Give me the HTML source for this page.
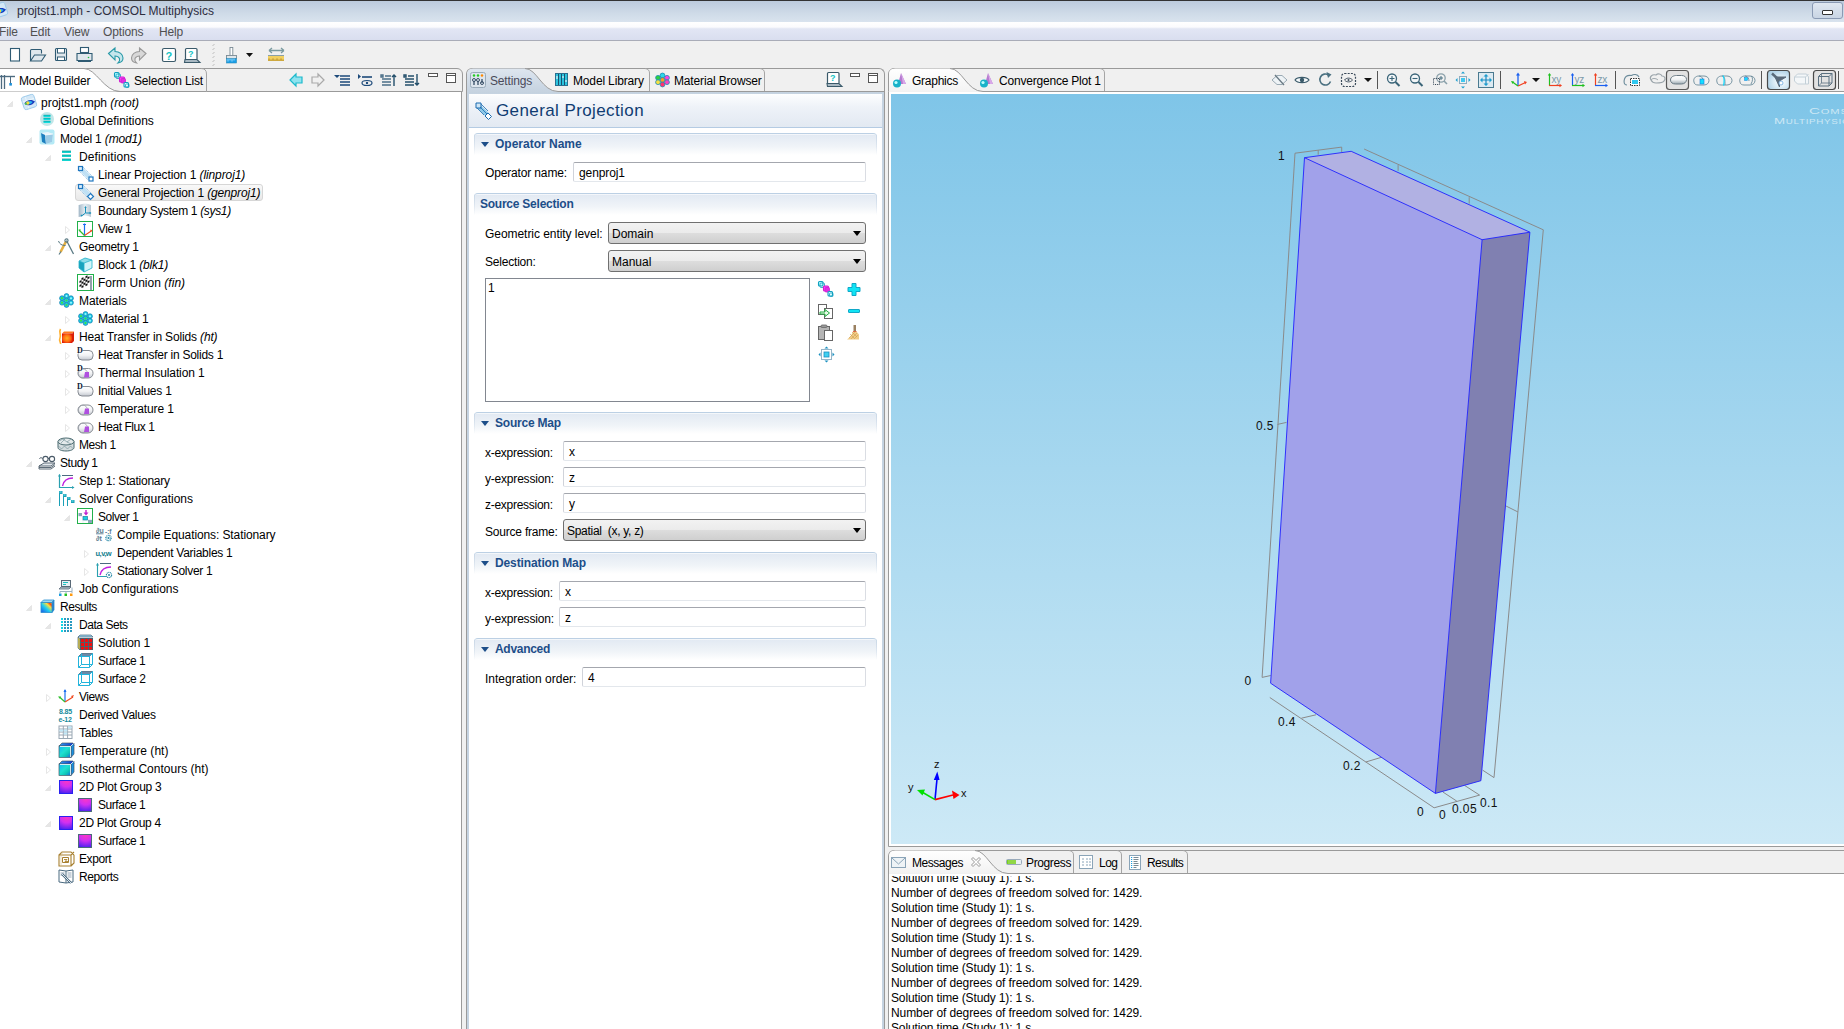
<!DOCTYPE html>
<html><head><meta charset="utf-8">
<style>
*{margin:0;padding:0;box-sizing:border-box}
html,body{width:1844px;height:1029px;overflow:hidden;background:#f0f0f0;font-family:"Liberation Sans",sans-serif;font-size:12px;color:#000}
.a{position:absolute}
.t{position:absolute;white-space:nowrap;line-height:14px;font-size:12px;letter-spacing:-0.15px}
svg{position:absolute;overflow:visible}
#title{left:0;top:0;width:1844px;height:22px;background:linear-gradient(#bccbdd,#cfdbe8 60%,#d9e3ee);border-top:1px solid #333}
#menu{left:0;top:22px;width:1844px;height:19px;background:linear-gradient(#ffffff 0,#fbfbfd 28%,#e2e6f4 38%,#d9deef 100%);border-bottom:1px solid #a9acb8}
#tb{left:0;top:41px;width:1844px;height:27px;background:#f0f0f0}
.pb{position:absolute;border:1px solid #9a9a9a;border-bottom:none}
.i{font-style:italic}
.sec{position:absolute;height:22px;border-top:1px solid #bcd0e4;border-radius:4px 4px 0 0;background:linear-gradient(#c9d7e6,rgba(201,215,230,0)) left top/1px 100% no-repeat,linear-gradient(#c9d7e6,rgba(201,215,230,0)) right top/1px 100% no-repeat,linear-gradient(#fff 0,#e3eaf3 6%,#f0f4f8 60%,#fff 100%)}
.sec .tx{position:absolute;left:21px;top:3px;font-weight:bold;color:#1d4e89;font-size:12px;line-height:14px;white-space:nowrap}
.tri{position:absolute;left:6.5px;top:8px;width:0;height:0;border-left:4px solid transparent;border-right:4px solid transparent;border-top:5px solid #1d4e89}
.inp{position:absolute;height:20px;border:1px solid;border-color:#a4a7ae #dadde3 #e3e7ec #d0d3da;background:#fff;border-radius:2px}
.inp span{position:absolute;left:5px;top:3px;line-height:14px;white-space:nowrap}
.dd{position:absolute;height:22px;border:1px solid #707070;border-radius:3px;background:linear-gradient(#f2f2f2 0,#ebebeb 50%,#dddddd 51%,#cfcfcf 100%)}
.dd span{position:absolute;left:3px;top:4px;line-height:14px;white-space:nowrap}
.dd i{position:absolute;right:4px;top:8px;width:0;height:0;border-left:4px solid transparent;border-right:4px solid transparent;border-top:5px solid #000}
.msg{position:absolute;left:891px;white-space:nowrap;line-height:15px;font-size:12px;letter-spacing:-0.09px}
</style></head><body>

<!-- TITLE BAR -->
<div id="title" class="a"></div>
<svg style="left:-8px;top:2px" width="16" height="16" viewBox="0 0 16 16"><g transform="rotate(-18 8 8)"><rect x="1.5" y="1.5" width="13" height="13" rx="2" fill="#d4e8f7" stroke="#9ccaea" stroke-width=".9"/></g><path d="M3.5 9.5c1.5-3.5 7-5 10.5-2-2 4-7.5 5-10.5 2z" fill="#1a3cc0"/><path d="M5 9.3c1.2-2.2 4.5-3 6.5-1.3-1.5 2.3-4.7 3-6.5 1.3z" fill="#28b8f0"/><circle cx="7.5" cy="9" r="1.7" fill="#f4dc3a"/><circle cx="6" cy="10" r="1.1" fill="#4cc44c"/></svg>
<div class="t" style="left:17px;top:4px;color:#2e2e3e;font-size:12px;letter-spacing:0">projtst1.mph - COMSOL Multiphysics</div>
<div class="a" style="left:1812px;top:2px;width:31px;height:17px;border:1px solid #8a9ab4;border-radius:3px;background:linear-gradient(#dfe7f1,#c9d5e4)"></div>
<div class="a" style="left:1822px;top:10px;width:11px;height:5px;border:1px solid #333;border-radius:1px;background:#fff"></div>
<!-- MENU -->
<div id="menu" class="a"></div>
<div class="t" style="left:-1px;top:25px;color:#505050">File</div>
<div class="t" style="left:30px;top:25px;color:#505050">Edit</div>
<div class="t" style="left:64px;top:25px;color:#505050">View</div>
<div class="t" style="left:103px;top:25px;color:#505050">Options</div>
<div class="t" style="left:159px;top:25px;color:#505050">Help</div>
<!-- TOOLBAR -->
<div id="tb" class="a"></div>
<svg style="left:0;top:41px" width="300" height="27" viewBox="0 0 300 27">
 <rect x="10.5" y="7.5" width="9" height="12.5" fill="#fff" stroke="#2f5b73" stroke-width="1.1"/>
 <path d="M30.5 20V9.5q0-1 1-1h9q1 0 1 1v3M30.5 20l4-6h11l-4 6z" fill="#dfe7ec" stroke="#2f5b73" stroke-width="1.1"/>
 <path d="M55.5 8.5q0-1 1-1h9q1 0 1 1v10q0 1-1 1h-9q-1 0-1-1z" fill="#dfe7ec" stroke="#2f5b73" stroke-width="1.1"/><rect x="57.5" y="7.5" width="7" height="4.5" fill="#fff" stroke="#2f5b73"/><rect x="57.5" y="16" width="7" height="3.5" fill="#fff" stroke="#2f5b73"/>
 <rect x="80.5" y="6.5" width="8" height="5" fill="#fff" stroke="#2f5b73" stroke-width="1.1"/><path d="M77 12.5h15v7H77z" fill="#dfe7ec" stroke="#2f5b73" stroke-width="1.1"/><path d="M78 20.5h13" stroke="#2f5b73"/><circle cx="88.5" cy="16.5" r=".8" fill="#20c040"/>
 <path d="M108.5 12.5L115 7v3.5c4.5 0 8 3 8 6.5 0 2.5-2 4.5-5 5 1.5-1.5 2-3 1.5-4.5-.8-1.5-2.5-2.5-4.5-2.5V19z" fill="#c4e6ec" stroke="#2a9aa8" stroke-width="1.1"/>
 <path d="M146 12.5L139.5 7v3.5c-4.5 0-8 3-8 6.5 0 2.5 2 4.5 5 5-1.5-1.5-2-3-1.5-4.5.8-1.5 2.5-2.5 4.5-2.5V19z" fill="#d8d8d8" stroke="#9a9a9a" stroke-width="1.1"/>
 <rect x="162.5" y="7.5" width="13" height="13" rx="1.5" fill="#fff" stroke="#3a5a6a" stroke-width="1.2"/><text x="165.5" y="18.5" font-size="11" font-weight="bold" fill="#12c4c4" font-family="Liberation Sans">?</text>
 <path d="M185.5 18V8.5q0-1 1-1h9.5q1 0 1 1V18" fill="#fff" stroke="#3a5a6a" stroke-width="1.2"/><path d="M185 18.5h12l3 3h-15.5z" fill="#a8b8c2" stroke="#3a5a6a" stroke-width="1.1"/><text x="188" y="16" font-size="9" font-weight="bold" fill="#12c4c4" font-family="Liberation Sans">?</text>
 <path d="M213 4.5l1-1M213 8.5l1-1M213 12.5l1-1M213 16.5l1-1M213 20.5l1-1M213 24.5l1-1" stroke="#888" stroke-width="1"/>
 <rect x="230" y="6.5" width="2.8" height="8.5" fill="#fff" stroke="#7a8a94" stroke-width=".9"/><rect x="226.5" y="14.5" width="10" height="3" fill="#dfe6ea" stroke="#7a8a94" stroke-width=".9"/><rect x="226.5" y="17.5" width="10" height="4.5" fill="#1a9ee8" stroke="#2a8ab8" stroke-width=".6"/><path d="M228 17.5v3M230 17.5v2M232 17.5v3M234 17.5v2" stroke="#c8ecff" stroke-width=".8"/>
 <path d="M246 12h7l-3.5 4z" fill="#111"/>
 <path d="M269 9.5h15M269 9.5l3-2.5M269 9.5l3 2.5M284 9.5l-3-2.5M284 9.5l-3 2.5" stroke="#7a9aa0" stroke-width="1.3" fill="none"/><path d="M268 14.5h16" stroke="#8aa0a8"/><rect x="268" y="15" width="16" height="5" fill="#f2d060"/><path d="M269 20v-2.5M271 20v-1.5M273 20v-2.5M275 20v-1.5M277 20v-2.5M279 20v-1.5M281 20v-2.5M283 20v-1.5" stroke="#a07818" stroke-width=".9"/>
</svg>

<!-- MODEL BUILDER -->
<div class="a" style="left:-6px;top:68px;width:469px;height:24px;border:1px solid #9a9a9a;border-bottom:1px solid #9a9a9a;border-radius:6px 6px 0 0;background:#f0f0f0"></div>
<svg style="left:0;top:68px" width="130" height="24" viewBox="0 0 130 24"><path d="M0 0.5H84C96 0.5 104 23.5 120 23.5H0z" fill="#fff"/><path d="M0 0.5H84C96 0.5 104 23.5 120 23.5" fill="none" stroke="#9a9a9a"/></svg>
<svg style="left:190px;top:68px" width="20" height="24" viewBox="0 0 20 24"><path d="M16.5 24V6Q16.5 0.5 11 0.5" fill="none" stroke="#a5a5a5"/></svg>
<div class="a" style="left:0;top:92px;width:462px;height:937px;background:#fff;border-right:1px solid #9a9a9a"></div>
<svg style="left:0;top:68px" width="20" height="24" viewBox="0 0 20 24"><path d="M0 8.5h15" stroke="#4d6b80" stroke-width="1.4"/><path d="M1.5 7v14M4.5 7v14" stroke="#4d6b80" stroke-width="1.3"/><path d="M10.5 9v6" stroke="#4d6b80" stroke-width="1"/><rect x="9.3" y="15" width="2.6" height="2.6" fill="#1c8fd8"/></svg>
<div class="t" style="left:19px;top:74px">Model Builder</div>
<svg style="left:113px;top:68px" width="20" height="24" viewBox="0 0 20 24"><rect x="1.5" y="4.5" width="4.5" height="4.5" rx="1" fill="#bff" stroke="#10a0c0" stroke-width="1.1"/><rect x="3" y="6" width="4.5" height="4.5" rx="1" fill="none" stroke="#10a0c0" stroke-width=".8"/><rect x="6.5" y="9" width="5" height="5" rx="1" fill="#f4f" stroke="#d020d0" stroke-width="1.1"/><rect x="8" y="10.5" width="4.5" height="4.5" rx="1" fill="#e030e0" stroke="#d020d0" stroke-width=".8"/><rect x="11" y="14.5" width="4.5" height="4.5" rx="1" fill="#dff" stroke="#10a0c0" stroke-width="1.1"/><rect x="12.5" y="16" width="3.5" height="3.5" rx=".8" fill="none" stroke="#10a0c0" stroke-width=".8"/></svg>
<div class="t" style="left:134px;top:74px;letter-spacing:-0.17px">Selection List</div>
<svg style="left:280px;top:66px" width="182" height="28" viewBox="0 0 182 28">
 <path d="M10 14l6-6v3h6v6h-6v3z" fill="#8fe3ef" stroke="#1cb9cc" stroke-width="1.2"/>
 <path d="M44 14l-6-6v3h-6v6h6v3z" fill="none" stroke="#a9a9a9" stroke-width="1.2"/>
 <path d="M54 9h6l-3 3z" fill="#1d4a7a"/><path d="M60 10h10M60 13h10M60 16h10M60 19h10" stroke="#1d4a7a" stroke-width="1.6"/>
 <path d="M78 8v5l3-2.5z" fill="#1d4a7a"/><path d="M82 11h10" stroke="#1d4a7a" stroke-width="1.6"/><ellipse cx="87" cy="17" rx="5" ry="2.5" fill="none" stroke="#1d4a7a" stroke-width="1.2"/><circle cx="87" cy="17" r="1.2" fill="#1d4a7a"/>
 <path d="M101 9h2v2h-2zM105 10h6M102 13h9M102 16h9M102 19h9" stroke="#4b6f88" stroke-width="1.4" fill="none"/><path d="M114 9v11M112 11l2-2 2 2" stroke="#234f6b" stroke-width="1.4" fill="none"/>
 <path d="M124 9h2v2h-2zM128 10h6M125 13h9M125 16h9M125 19h9" stroke="#234f6b" stroke-width="1.4" fill="none"/><path d="M137 8v11M135 17l2 2 2-2" stroke="#234f6b" stroke-width="1.4" fill="none"/>
 <rect x="148.5" y="7.5" width="9" height="3" fill="#fff" stroke="#555"/>
 <rect x="166.5" y="7.5" width="9" height="9" fill="#fff" stroke="#555"/><path d="M166.5 9.5h9" stroke="#555"/>
</svg>

<svg width="0" height="0" style="position:absolute"><defs>
<linearGradient id="sysg" x1="0" y1="0" x2="1" y2="0"><stop offset="0" stop-color="#a9bccb"/><stop offset=".5" stop-color="#e4edf3"/><stop offset="1" stop-color="#b8c8d4"/></linearGradient>
<linearGradient id="pillg" x1="0" y1="0" x2="0" y2="1"><stop offset="0" stop-color="#ffffff"/><stop offset=".5" stop-color="#f2f3f5"/><stop offset="1" stop-color="#c4c8d0"/></linearGradient>
<radialGradient id="htg" cx=".5" cy=".5" r=".6"><stop offset="0" stop-color="#ffb020"/><stop offset=".6" stop-color="#ff6a10"/><stop offset="1" stop-color="#e01a08"/></radialGradient>
<linearGradient id="resg" x1="1" y1="0" x2="0" y2="1"><stop offset="0" stop-color="#ffd020"/><stop offset=".15" stop-color="#ff4010"/><stop offset=".3" stop-color="#f8e040"/><stop offset=".55" stop-color="#20d0f0"/><stop offset="1" stop-color="#1a50e8"/></linearGradient>
<linearGradient id="pgfront" x1="0" y1="0" x2="1" y2="1"><stop offset="0" stop-color="#10b8f8"/><stop offset=".45" stop-color="#20e0d0"/><stop offset=".7" stop-color="#10c8b8"/><stop offset="1" stop-color="#1a60f0"/></linearGradient>
<linearGradient id="pgtop" x1="0" y1="0" x2="1" y2="0"><stop offset="0" stop-color="#30a0f0"/><stop offset="1" stop-color="#0a30d0"/></linearGradient>
<radialGradient id="pg2" cx=".55" cy="0" r="1.1"><stop offset="0" stop-color="#ff38c0"/><stop offset=".45" stop-color="#d030f0"/><stop offset="1" stop-color="#3a20f0"/></radialGradient>
</defs></svg>
<!-- TREE -->
<svg style="left:21px;top:94px" width="16" height="16" viewBox="0 0 16 16"><g transform="rotate(-18 8 8)"><rect x="1.5" y="1.5" width="13" height="13" rx="2" fill="#d4e8f7" stroke="#9ccaea" stroke-width=".9"/><path d="M2 6h12M6 2v12" stroke="#eef7fd" stroke-width=".8"/></g><path d="M3.5 9.5c1.5-3.5 7-5 10.5-2-2 4-7.5 5-10.5 2z" fill="#1a3cc0"/><path d="M5 9.3c1.2-2.2 4.5-3 6.5-1.3-1.5 2.3-4.7 3-6.5 1.3z" fill="#28b8f0"/><circle cx="6.8" cy="9" r="1.7" fill="#f4dc3a"/><circle cx="4.8" cy="9.8" r="1.1" fill="#4cc44c"/></svg>
<svg style="left:6px;top:93px" width="8" height="18" viewBox="0 0 8 18"><path d="M6.5 8.5v5h-5z" fill="#e6e6e6" stroke="#dcdcdc" stroke-width=".6"/></svg>
<div class="t" style="left:41px;top:96px;letter-spacing:-0.002px">projtst1.mph<span class="i"> (root)</span></div>
<svg style="left:40px;top:112px" width="16" height="16" viewBox="0 0 16 16"><circle cx="7" cy="7" r="7" fill="#c2e6e8"/><path d="M3.5 4h7M3.5 7h7M3.5 10h7" stroke="#12dede" stroke-width="1.8"/><path d="M3.5 3.2h7M3.5 6.2h7M3.5 9.2h7" stroke="#0a8c96" stroke-width=".6"/></svg>
<div class="t" style="left:60px;top:114px;letter-spacing:-0.015px">Global Definitions</div>
<svg style="left:40px;top:130px" width="16" height="16" viewBox="0 0 16 16"><rect x="-0.5" y="-0.5" width="15" height="15" rx="2" fill="#b4eaf6"/><path d="M1 3l7-1 5 2-1 8-6 2-4-2z" fill="#eaf4fb"/><path d="M1 3l4 2 1 9-4-2z" fill="#1c7fbf"/><path d="M5 5l8-1-1 8-6 2z" fill="#9ccbe6"/><path d="M5 5l8-1" stroke="#fff" stroke-width=".8"/></svg>
<svg style="left:25px;top:129px" width="8" height="18" viewBox="0 0 8 18"><path d="M6.5 8.5v5h-5z" fill="#e6e6e6" stroke="#dcdcdc" stroke-width=".6"/></svg>
<div class="t" style="left:60px;top:132px;letter-spacing:-0.149px">Model 1<span class="i"> (mod1)</span></div>
<svg style="left:59px;top:148px" width="16" height="16" viewBox="0 0 16 16"><path d="M3 4h9M3 8h9M3 12h9" stroke="#14d4d0" stroke-width="2.2"/><path d="M3 3h9M3 7h9M3 11h9" stroke="#0a8a8a" stroke-width=".7"/></svg>
<svg style="left:44px;top:147px" width="8" height="18" viewBox="0 0 8 18"><path d="M6.5 8.5v5h-5z" fill="#e6e6e6" stroke="#dcdcdc" stroke-width=".6"/></svg>
<div class="t" style="left:79px;top:150px;letter-spacing:0.097px">Definitions</div>
<svg style="left:78px;top:166px" width="16" height="16" viewBox="0 0 16 16"><path d="M2.5 2.5l10.5 10.5" stroke="#bfe0f4" stroke-width="4.5"/><path d="M1 5l9 9M5 1l9 9" stroke="#6aa8d8" stroke-width=".8" stroke-dasharray="1 1"/><rect x="0.5" y="0.5" width="4" height="4" fill="#dbeefb" stroke="#1f77c0" stroke-width="1.2"/><rect x="11" y="11" width="4" height="4" fill="#fff" stroke="#1f77c0" stroke-width="1.2"/></svg>
<div class="t" style="left:98px;top:168px;letter-spacing:-0.096px">Linear Projection 1<span class="i"> (linproj1)</span></div>
<div class="a" style="left:75px;top:184px;width:188px;height:17px;border:1px solid #d6d6d6;border-radius:3px;background:linear-gradient(#f9f9f9,#e8e8e8)"></div>
<svg style="left:78px;top:184px" width="16" height="16" viewBox="0 0 16 16"><path d="M2.5 2.5l9.5 9.5" stroke="#bfe0f4" stroke-width="4.5"/><path d="M1 5l8.5 8.5M5 1l8.5 8.5" stroke="#6aa8d8" stroke-width=".8" stroke-dasharray="1 1"/><rect x="0.5" y="0.5" width="4" height="4" fill="#dbeefb" stroke="#1f77c0" stroke-width="1.2"/><path d="M12.5 9.5l3 3-3 3-3-3z" fill="#fff" stroke="#1f77c0" stroke-width="1.2"/></svg>
<div class="t" style="left:98px;top:186px;letter-spacing:-0.168px">General Projection 1<span class="i"> (genproj1)</span></div>
<svg style="left:78px;top:202px" width="16" height="16" viewBox="0 0 16 16"><path d="M1 3c2-1 4-1.5 6-1.5s4 .5 6 1.5v12c-2-1-4-1.5-6-1.5s-4 .5-6 1.5z" fill="url(#sysg)"/><path d="M1 3v12" stroke="#a8bccb" stroke-width=".8"/><path d="M7.5 11V5M7.5 11h5M7.5 11l-4 3" stroke="#1a90b8" stroke-width="1"/><path d="M6.3 6l1.2-2 1.2 2zM11.5 9.8l2 1.2-2 1.2zM3 12.3l-0.5 2.2 2.2-.5z" fill="#1a90b8"/></svg>
<div class="t" style="left:98px;top:204px;letter-spacing:-0.327px">Boundary System 1<span class="i"> (sys1)</span></div>
<svg style="left:78px;top:220px" width="16" height="16" viewBox="0 0 16 16"><rect x="-0.5" y="1.5" width="15" height="15" fill="#fff" stroke="#21b04a"/><path d="M6.5 15.5V3.5" stroke="#1a6ef0" stroke-width="1.2"/><path d="M5 4.5h3" stroke="#1a6ef0" stroke-width="1"/><path d="M6.5 15.5L1 10" stroke="#2fc02f" stroke-width="1.2"/><path d="M0.5 9.5l2.5 0-1.5 2z" fill="#2fc02f"/><path d="M6.5 15.5L14 10.5" stroke="#f04a20" stroke-width="1.2"/><path d="M14.5 10l-2.5-.3 1 2z" fill="#f04a20"/></svg>
<svg style="left:63px;top:219px" width="8" height="18" viewBox="0 0 8 18"><path d="M2.5 7.5l4 3.5-4 3.5z" fill="none" stroke="#e6e6e6"/></svg>
<div class="t" style="left:98px;top:222px;letter-spacing:-0.45px">View 1</div>
<svg style="left:59px;top:238px" width="16" height="16" viewBox="0 0 16 16"><path d="M7.5 2.5L14.5 16" stroke="#5a7a84" stroke-width="1.3"/><path d="M7 3.5L1.5 14" stroke="#e6b040" stroke-width="2.6"/><path d="M2 13.5L0 16.5" stroke="#5a7a84" stroke-width="1.2"/><circle cx="7.5" cy="2.5" r="1.6" fill="none" stroke="#5a7a84" stroke-width="1.1"/><path d="M-0.5 3c1 3 3 4.5 7 4.5" stroke="#5a7a84" fill="none" stroke-width="1"/></svg>
<svg style="left:44px;top:237px" width="8" height="18" viewBox="0 0 8 18"><path d="M6.5 8.5v5h-5z" fill="#e6e6e6" stroke="#dcdcdc" stroke-width=".6"/></svg>
<div class="t" style="left:79px;top:240px;letter-spacing:-0.299px">Geometry 1</div>
<svg style="left:78px;top:256px" width="16" height="16" viewBox="0 0 16 16"><path d="M1 5L7 2L14 4L6 7z" fill="#8fdde8"/><path d="M1 5L6 7V16L1 12z" fill="#1aa3bd"/><path d="M6 7L14 4V12L6 16z" fill="#d2f5f9"/><path d="M1 5L7 2L14 4V12L6 16L1 12zM1 5L6 7L14 4M6 7V16" fill="none" stroke="#1fb0c8" stroke-width=".8"/></svg>
<div class="t" style="left:98px;top:258px;letter-spacing:-0.184px">Block 1<span class="i"> (blk1)</span></div>
<svg style="left:78px;top:274px" width="16" height="16" viewBox="0 0 16 16"><rect x="-0.5" y="0.5" width="16" height="16" fill="#fff" stroke="#21b04a"/><g transform="translate(1.5,6) skewY(-25)"><path d="M0 1h2v2H0zM2 3h2v2H2zM4 1h2v2H4zM6 3h2v2H6zM8 1h2v2H8zM0 5h2v2H0zM4 5h2v2H4zM8 5h2v2H8zM2 -1h2v2H2zM6 -1h2v2H6zM2 7h2v2H2zM6 7h2v2H6z" fill="#111"/></g><path d="M13 2v14" stroke="#7a8898" stroke-width="1.6"/></svg>
<div class="t" style="left:98px;top:276px;letter-spacing:0.028px">Form Union<span class="i"> (fin)</span></div>
<svg style="left:59px;top:292px" width="16" height="16" viewBox="0 0 16 16"><g stroke="#1a86b6" stroke-width=".8" fill="#18cbe6"><circle cx="7.5" cy="4" r="2.4"/><circle cx="7.5" cy="8.5" r="2.4"/><circle cx="7.5" cy="13" r="2.4"/><circle cx="3" cy="6.2" r="2.4"/><circle cx="3" cy="10.7" r="2.4"/><circle cx="12" cy="6.2" r="2.4"/><circle cx="12" cy="10.7" r="2.4"/></g><g fill="#3ee23e"><circle cx="7.5" cy="8.5" r="1.1"/><circle cx="7.5" cy="13" r="1.1"/><circle cx="3" cy="6.2" r="1.1"/><circle cx="3" cy="10.7" r="1.1"/></g><g fill="#9ff6ff"><circle cx="7.5" cy="4" r="1"/><circle cx="12" cy="6.2" r="1"/><circle cx="12" cy="10.7" r="1"/></g></svg>
<svg style="left:44px;top:291px" width="8" height="18" viewBox="0 0 8 18"><path d="M6.5 8.5v5h-5z" fill="#e6e6e6" stroke="#dcdcdc" stroke-width=".6"/></svg>
<div class="t" style="left:79px;top:294px;letter-spacing:-0.11px">Materials</div>
<svg style="left:78px;top:310px" width="16" height="16" viewBox="0 0 16 16"><g stroke="#1a86b6" stroke-width=".8" fill="#18cbe6"><circle cx="7.5" cy="4" r="2.4"/><circle cx="7.5" cy="8.5" r="2.4"/><circle cx="7.5" cy="13" r="2.4"/><circle cx="3" cy="6.2" r="2.4"/><circle cx="3" cy="10.7" r="2.4"/><circle cx="12" cy="6.2" r="2.4"/><circle cx="12" cy="10.7" r="2.4"/></g><g fill="#3ee23e"><circle cx="7.5" cy="8.5" r="1.1"/><circle cx="7.5" cy="13" r="1.1"/><circle cx="3" cy="6.2" r="1.1"/><circle cx="3" cy="10.7" r="1.1"/></g><g fill="#9ff6ff"><circle cx="7.5" cy="4" r="1"/><circle cx="12" cy="6.2" r="1"/><circle cx="12" cy="10.7" r="1"/></g></svg>
<svg style="left:63px;top:309px" width="8" height="18" viewBox="0 0 8 18"><path d="M2.5 7.5l4 3.5-4 3.5z" fill="none" stroke="#e6e6e6"/></svg>
<div class="t" style="left:98px;top:312px;letter-spacing:-0.221px">Material 1</div>
<svg style="left:59px;top:328px" width="16" height="16" viewBox="0 0 16 16"><path d="M1.5 1c-2 3 1 6-0.5 9s1 4 0.5 6" stroke="#ffb030" stroke-width="1.6" fill="none"/><path d="M3 5.5L5 3.5H15L13 5.5z" fill="#ff7a20"/><path d="M13 5.5L15 3.5V13L13 15z" fill="#d82008"/><rect x="3" y="5.5" width="10" height="9.5" fill="url(#htg)"/></svg>
<svg style="left:44px;top:327px" width="8" height="18" viewBox="0 0 8 18"><path d="M6.5 8.5v5h-5z" fill="#e6e6e6" stroke="#dcdcdc" stroke-width=".6"/></svg>
<div class="t" style="left:79px;top:330px;letter-spacing:-0.153px">Heat Transfer in Solids<span class="i"> (ht)</span></div>
<svg style="left:78px;top:346px" width="16" height="16" viewBox="0 0 16 16"><rect x="0" y="4.5" width="15" height="9.5" rx="4" fill="url(#pillg)" stroke="#7a8088" stroke-width=".9"/><rect x="-1" y="1" width="5.5" height="6.5" fill="#fff"/><text x="-1" y="6.5" font-family="Liberation Serif" font-weight="bold" font-size="8" fill="#081838">D</text></svg>
<svg style="left:63px;top:345px" width="8" height="18" viewBox="0 0 8 18"><path d="M2.5 7.5l4 3.5-4 3.5z" fill="none" stroke="#e6e6e6"/></svg>
<div class="t" style="left:98px;top:348px;letter-spacing:-0.251px">Heat Transfer in Solids 1</div>
<svg style="left:78px;top:364px" width="16" height="16" viewBox="0 0 16 16"><rect x="0" y="4.5" width="15" height="9.5" rx="4.5" fill="url(#pillg)" stroke="#7a8088" stroke-width=".9"/><ellipse cx="5" cy="9.5" rx="4.5" ry="4.5" fill="none" stroke="#9aa0a8" stroke-width=".8"/><path d="M7 8h4v5.5H6z" fill="#b050e0"/><rect x="-1" y="1" width="5.5" height="6" fill="#fff"/><text x="-1" y="6.5" font-family="Liberation Serif" font-weight="bold" font-size="8" fill="#081838">D</text></svg>
<svg style="left:63px;top:363px" width="8" height="18" viewBox="0 0 8 18"><path d="M2.5 7.5l4 3.5-4 3.5z" fill="none" stroke="#e6e6e6"/></svg>
<div class="t" style="left:98px;top:366px;letter-spacing:-0.106px">Thermal Insulation 1</div>
<svg style="left:78px;top:382px" width="16" height="16" viewBox="0 0 16 16"><rect x="0" y="4.5" width="15" height="9.5" rx="4" fill="url(#pillg)" stroke="#7a8088" stroke-width=".9"/><rect x="-1" y="1" width="5.5" height="6.5" fill="#fff"/><text x="-1" y="6.5" font-family="Liberation Serif" font-weight="bold" font-size="8" fill="#081838">D</text></svg>
<svg style="left:63px;top:381px" width="8" height="18" viewBox="0 0 8 18"><path d="M2.5 7.5l4 3.5-4 3.5z" fill="none" stroke="#e6e6e6"/></svg>
<div class="t" style="left:98px;top:384px;letter-spacing:-0.217px">Initial Values 1</div>
<svg style="left:78px;top:400px" width="16" height="16" viewBox="0 0 16 16"><rect x="0" y="5" width="15" height="10" rx="5" fill="url(#pillg)" stroke="#7a8088" stroke-width=".9"/><ellipse cx="5" cy="10" rx="4.5" ry="4.8" fill="none" stroke="#9aa0a8" stroke-width=".8"/><path d="M7 8.5h4v5.5H6z" fill="#b050e0"/></svg>
<svg style="left:63px;top:399px" width="8" height="18" viewBox="0 0 8 18"><path d="M2.5 7.5l4 3.5-4 3.5z" fill="none" stroke="#e6e6e6"/></svg>
<div class="t" style="left:98px;top:402px;letter-spacing:-0.131px">Temperature 1</div>
<svg style="left:78px;top:418px" width="16" height="16" viewBox="0 0 16 16"><rect x="0" y="5" width="15" height="10" rx="5" fill="url(#pillg)" stroke="#7a8088" stroke-width=".9"/><ellipse cx="5" cy="10" rx="4.5" ry="4.8" fill="none" stroke="#9aa0a8" stroke-width=".8"/><path d="M7 8.5h4v5.5H6z" fill="#b050e0"/></svg>
<svg style="left:63px;top:417px" width="8" height="18" viewBox="0 0 8 18"><path d="M2.5 7.5l4 3.5-4 3.5z" fill="none" stroke="#e6e6e6"/></svg>
<div class="t" style="left:98px;top:420px;letter-spacing:-0.446px">Heat Flux 1</div>
<svg style="left:59px;top:436px" width="16" height="16" viewBox="0 0 16 16"><path d="M-1 5.5v6c0 2 3.5 3.5 8 3.5s8-1.5 8-3.5v-6" fill="#d4dcde" stroke="#4a6a70"/><ellipse cx="7" cy="5.5" rx="8" ry="3.5" fill="#e4eaeb" stroke="#4a6a70"/><path d="M0 5l4-2 4 3 4-3 2 2M2 7l4-4M8 6l4 2M-0.5 10l3 3 3-3 3 3 3-3 3 3" stroke="#6a8a90" stroke-width=".6" fill="none"/></svg>
<div class="t" style="left:79px;top:438px;letter-spacing:-0.45px">Mesh 1</div>
<svg style="left:40px;top:454px" width="16" height="16" viewBox="0 0 16 16"><path d="M-0.5 5c1-2 2-2 3 0" stroke="#4a5a68" fill="none"/><circle cx="5.5" cy="5" r="2.6" fill="#fff" stroke="#4a5a68" stroke-width="1.1"/><circle cx="12" cy="5" r="2.6" fill="#fff" stroke="#4a5a68" stroke-width="1.1"/><path d="M8 4.5h1.5" stroke="#4a5a68"/><path d="M-1 12l5-3h11l-4 3z" fill="#e4eaee" stroke="#4a5a68" stroke-width=".9"/><path d="M-1 12v1.5h12l4-3M-1 13.5v1.5h12l4-3" fill="none" stroke="#4a5a68" stroke-width=".9"/></svg>
<svg style="left:25px;top:453px" width="8" height="18" viewBox="0 0 8 18"><path d="M6.5 8.5v5h-5z" fill="#e6e6e6" stroke="#dcdcdc" stroke-width=".6"/></svg>
<div class="t" style="left:60px;top:456px;letter-spacing:-0.45px">Study 1</div>
<svg style="left:59px;top:472px" width="16" height="16" viewBox="0 0 16 16"><path d="M0.5 2.5v13h14" stroke="#2aa0b0" fill="none" stroke-width="1.2"/><path d="M-1 4.5l1.5-2.5 1.5 2.5z" fill="#2aa0b0"/><path d="M13 14l2.5 1.5-2.5 1.5z" fill="#2aa0b0"/><path d="M3 3.5h11" stroke="#4a6a80"/><path d="M3.5 14c1-5 4-8 10.5-8" stroke="#c020e0" stroke-width="1.3" fill="none"/></svg>
<div class="t" style="left:79px;top:474px;letter-spacing:-0.258px">Step 1: Stationary</div>
<svg style="left:59px;top:490px" width="16" height="16" viewBox="0 0 16 16"><path d="M0.5 1v15M4.5 4v12M8.5 7v9" stroke="#1aa0b8" stroke-width="1"/><rect x="0" y="1" width="3.5" height="3" fill="#1aa0b8"/><rect x="4" y="4" width="3.5" height="3" fill="#1aa0b8"/><rect x="8" y="7" width="3.5" height="3" fill="#1aa0b8"/><rect x="12" y="10" width="3.5" height="3" fill="#1aa0b8"/><path d="M0.5 2h2M4.5 5h2M8.5 8h2M12.5 11h2" stroke="#8ff" stroke-width=".8"/></svg>
<svg style="left:44px;top:489px" width="8" height="18" viewBox="0 0 8 18"><path d="M6.5 8.5v5h-5z" fill="#e6e6e6" stroke="#dcdcdc" stroke-width=".6"/></svg>
<div class="t" style="left:79px;top:492px;letter-spacing:-0.041px">Solver Configurations</div>
<svg style="left:78px;top:508px" width="16" height="16" viewBox="0 0 16 16"><rect x="-0.5" y="0.5" width="15" height="15" fill="#fff" stroke="#21b04a"/><path d="M8 2v4" stroke="#c020d0" stroke-width="1.4"/><path d="M5.5 4.5l2.5 3 2.5-3z" fill="#c020d0"/><rect x="0.5" y="5" width="3.5" height="3" fill="#8aa4b8"/><rect x="5" y="8.5" width="4.5" height="3.5" fill="#1ad0e0" stroke="#1a80a0" stroke-width=".7"/><rect x="10" y="12" width="4" height="3" fill="#8aa4b8"/><path d="M0.5 8.5h4M5 12v3M10 11.5h4" stroke="#dde" stroke-width=".5"/></svg>
<svg style="left:63px;top:507px" width="8" height="18" viewBox="0 0 8 18"><path d="M6.5 8.5v5h-5z" fill="#e6e6e6" stroke="#dcdcdc" stroke-width=".6"/></svg>
<div class="t" style="left:98px;top:510px;letter-spacing:-0.45px">Solver 1</div>
<svg style="left:97px;top:526px" width="16" height="16" viewBox="0 0 16 16"><text x="-1" y="6.5" font-size="7" font-weight="bold" font-family="Liberation Sans" fill="#5a7a90">∂u</text><path d="M-1 7.8h7.5" stroke="#5a7a90" stroke-width=".9"/><text x="-1" y="14.5" font-size="7" font-weight="bold" font-family="Liberation Sans" fill="#5a7a90">∂t</text><text x="8" y="8" font-size="6.5" font-weight="bold" font-family="Liberation Sans" fill="#5a7a90">-:f</text><circle cx="11.5" cy="12" r="2.6" fill="none" stroke="#2a8aa8" stroke-width="1.4" stroke-dasharray="1 .6"/><circle cx="11.5" cy="12" r="1.1" fill="#2a8aa8"/></svg>
<div class="t" style="left:117px;top:528px;letter-spacing:-0.101px">Compile Equations: Stationary</div>
<svg style="left:97px;top:544px" width="16" height="16" viewBox="0 0 16 16"><text x="-1.5" y="11.5" font-size="7.5" font-weight="bold" font-family="Liberation Sans" fill="#108090" letter-spacing="-0.5">u,v,w</text></svg>
<svg style="left:82px;top:543px" width="8" height="18" viewBox="0 0 8 18"><path d="M2.5 7.5l4 3.5-4 3.5z" fill="none" stroke="#e6e6e6"/></svg>
<div class="t" style="left:117px;top:546px;letter-spacing:-0.27px">Dependent Variables 1</div>
<svg style="left:97px;top:562px" width="16" height="16" viewBox="0 0 16 16"><path d="M0.5 1.5v13h14" fill="none" stroke="#2aa0b0" stroke-width="1.1"/><path d="M-1 3.5l1.5-2.5 1.5 2.5z" fill="#2aa0b0"/><path d="M3 1.5h11" stroke="#4a6a80"/><path d="M3 13c1-5 4-8 11-8" stroke="#c020e0" stroke-width="1.3" fill="none"/><circle cx="12" cy="13" r="2.6" fill="#fff" stroke="#2a8aa8" stroke-width="1.2" stroke-dasharray="1 .6"/><circle cx="12" cy="13" r="1" fill="#2a8aa8"/></svg>
<svg style="left:82px;top:561px" width="8" height="18" viewBox="0 0 8 18"><path d="M2.5 7.5l4 3.5-4 3.5z" fill="none" stroke="#e6e6e6"/></svg>
<div class="t" style="left:117px;top:564px;letter-spacing:-0.321px">Stationary Solver 1</div>
<svg style="left:59px;top:580px" width="16" height="16" viewBox="0 0 16 16"><rect x="2.5" y="0.5" width="9" height="6" fill="#e8f0f4" stroke="#5a6a78"/><path d="M4 2.5h5M4 4.5h3" stroke="#20c0c0" stroke-width="1.2"/><path d="M0 9l2-2h10l-2 2z" fill="#b8c4cc" stroke="#5a6a78" stroke-width=".8"/><path d="M13 7.5v4H1v1.5M7 11.5v1.5M13 11.5v1.5" stroke="#9ab0c0" fill="none"/><rect x="0" y="13.5" width="2.5" height="2.5" fill="#1a9de0"/><rect x="5.5" y="13.5" width="2.5" height="2.5" fill="#20c020"/><rect x="11" y="13.5" width="2.5" height="2.5" fill="#ff9a10"/></svg>
<div class="t" style="left:79px;top:582px;letter-spacing:-0.033px">Job Configurations</div>
<svg style="left:40px;top:598px" width="16" height="16" viewBox="0 0 16 16"><path d="M1 4.5l2.5-2.5h10.5l-2 2.5z" fill="#9ad8f4" stroke="#2a90d0" stroke-width=".8"/><path d="M12 4.5l2-2.5v10l-2 2.5z" fill="#2a7ac8" stroke="#2a90d0" stroke-width=".8"/><rect x="1" y="4.5" width="11" height="10" fill="url(#resg)" stroke="#2a90d0" stroke-width=".8"/></svg>
<svg style="left:25px;top:597px" width="8" height="18" viewBox="0 0 8 18"><path d="M6.5 8.5v5h-5z" fill="#e6e6e6" stroke="#dcdcdc" stroke-width=".6"/></svg>
<div class="t" style="left:60px;top:600px;letter-spacing:-0.45px">Results</div>
<svg style="left:59px;top:616px" width="16" height="16" viewBox="0 0 16 16"><g fill="#10d8e8"><rect x="2" y="2" width="2" height="2"/><rect x="2" y="5" width="2" height="2"/><rect x="2" y="8" width="2" height="2"/><rect x="2" y="11" width="2" height="2"/><rect x="2" y="14" width="2" height="2"/></g><g fill="#2a9ac0"><rect x="5" y="2" width="2" height="2"/><rect x="5" y="5" width="2" height="2"/><rect x="5" y="8" width="2" height="2"/><rect x="5" y="11" width="2" height="2"/><rect x="5" y="14" width="2" height="2"/><rect x="8" y="2" width="2" height="2"/><rect x="8" y="5" width="2" height="2"/><rect x="8" y="8" width="2" height="2"/><rect x="8" y="11" width="2" height="2"/><rect x="8" y="14" width="2" height="2"/><rect x="11" y="2" width="2" height="2"/><rect x="11" y="5" width="2" height="2"/><rect x="11" y="8" width="2" height="2"/><rect x="11" y="11" width="2" height="2"/><rect x="11" y="14" width="2" height="2"/></g></svg>
<svg style="left:44px;top:615px" width="8" height="18" viewBox="0 0 8 18"><path d="M6.5 8.5v5h-5z" fill="#e6e6e6" stroke="#dcdcdc" stroke-width=".6"/></svg>
<div class="t" style="left:79px;top:618px;letter-spacing:-0.45px">Data Sets</div>
<svg style="left:78px;top:634px" width="16" height="16" viewBox="0 0 16 16"><path d="M0 3l2-2h11l2 2z" fill="#9ad0ec" stroke="#4a6a80" stroke-width=".7"/><path d="M0 3v11l2 2V5z" fill="#f0d040" stroke="#4a6a80" stroke-width=".7"/><rect x="2" y="4" width="13" height="12" fill="#4a6070"/><path d="M3 5h3v3H3zM7 5h3v3H7zM11 5h3v3h-3zM3 9h3v3H3zM7 9h3v3H7zM11 9h3v3h-3zM3 13h3v2.5H3zM7 13h3v2.5H7zM11 13h3v2.5h-3z" fill="#f01010"/></svg>
<div class="t" style="left:98px;top:636px;letter-spacing:-0.141px">Solution 1</div>
<svg style="left:78px;top:652px" width="16" height="16" viewBox="0 0 16 16"><path d="M0.5 4.5L3.5 1.5H14.5L11.5 4.5z" fill="#6a8aa8" stroke="#4a6a80" stroke-width=".8"/><path d="M0.5 4.5h11v11h-11z M11.5 4.5l3-3v11l-3 3M3.5 1.5v11h11M0.5 15.5l3-3" fill="none" stroke="#22b4dc" stroke-width="1"/></svg>
<div class="t" style="left:98px;top:654px;letter-spacing:-0.45px">Surface 1</div>
<svg style="left:78px;top:670px" width="16" height="16" viewBox="0 0 16 16"><path d="M0.5 4.5L3.5 1.5H14.5L11.5 4.5z" fill="#6a8aa8" stroke="#4a6a80" stroke-width=".8"/><path d="M0.5 4.5h11v11h-11z M11.5 4.5l3-3v11l-3 3M3.5 1.5v11h11M0.5 15.5l3-3" fill="none" stroke="#22b4dc" stroke-width="1"/></svg>
<div class="t" style="left:98px;top:672px;letter-spacing:-0.445px">Surface 2</div>
<svg style="left:59px;top:688px" width="16" height="16" viewBox="0 0 16 16"><path d="M6 14V2" stroke="#1a6ef0" stroke-width="1.2"/><path d="M4.5 4l1.5-3 1.5 3z" fill="#1a6ef0"/><path d="M6 14l8-5" stroke="#f04a20" stroke-width="1.2"/><path d="M12 8l3-1-1.5 3z" fill="#f04a20"/><path d="M6 14L0.5 9" stroke="#2fc02f" stroke-width="1.2"/><path d="M-1 8.5l3 0-1 2.5z" fill="#2fc02f"/></svg>
<svg style="left:44px;top:687px" width="8" height="18" viewBox="0 0 8 18"><path d="M2.5 7.5l4 3.5-4 3.5z" fill="none" stroke="#e6e6e6"/></svg>
<div class="t" style="left:79px;top:690px;letter-spacing:-0.45px">Views</div>
<svg style="left:59px;top:706px" width="16" height="16" viewBox="0 0 16 16"><text x="0" y="8" font-size="7" font-weight="bold" font-family="Liberation Sans" fill="#158a9a" letter-spacing="-0.2">8.85</text><text x="-0.5" y="15.5" font-size="7" font-weight="bold" font-family="Liberation Sans" fill="#158a9a" letter-spacing="-0.2">e-12</text></svg>
<div class="t" style="left:79px;top:708px;letter-spacing:-0.268px">Derived Values</div>
<svg style="left:59px;top:724px" width="16" height="16" viewBox="0 0 16 16"><rect x="0" y="2" width="13" height="12.5" fill="#fff" stroke="#9aa8b4"/><path d="M0 5h13M0 8h13M0 11h13M4.3 2v12.5M8.6 2v12.5" stroke="#9aa8b4"/><rect x="9" y="2.5" width="3.5" height="2" fill="#c0e8f8"/><rect x="4.8" y="5.5" width="3.5" height="2" fill="#c0e8f8"/><rect x="0.5" y="5.5" width="3.5" height="2" fill="#c0e8f8"/><rect x="4.8" y="8.5" width="3.5" height="2" fill="#c0e8f8"/></svg>
<div class="t" style="left:79px;top:726px;letter-spacing:-0.178px">Tables</div>
<svg style="left:59px;top:742px" width="16" height="16" viewBox="0 0 16 16"><path d="M0 4l3-3h11l1 3z" fill="url(#pgtop)" stroke="#4a5a68" stroke-width=".7"/><path d="M12 4l3-3v11l-3 3.5z" fill="#1a90e0" stroke="#4a5a68" stroke-width=".7"/><rect x="0" y="4" width="12" height="11.5" fill="url(#pgfront)" stroke="#4a5a68" stroke-width=".7"/><path d="M1 4.5h10.5v10.5M11.5 4.5l3-3" stroke="#fff" stroke-width=".8" fill="none"/></svg>
<svg style="left:44px;top:741px" width="8" height="18" viewBox="0 0 8 18"><path d="M2.5 7.5l4 3.5-4 3.5z" fill="none" stroke="#e6e6e6"/></svg>
<div class="t" style="left:79px;top:744px;letter-spacing:0.053px">Temperature (ht)</div>
<svg style="left:59px;top:760px" width="16" height="16" viewBox="0 0 16 16"><path d="M0 4l3-3h11l1 3z" fill="url(#pgtop)" stroke="#4a5a68" stroke-width=".7"/><path d="M12 4l3-3v11l-3 3.5z" fill="#1a90e0" stroke="#4a5a68" stroke-width=".7"/><rect x="0" y="4" width="12" height="11.5" fill="url(#pgfront)" stroke="#4a5a68" stroke-width=".7"/><path d="M1 4.5h10.5v10.5M11.5 4.5l3-3" stroke="#fff" stroke-width=".8" fill="none"/></svg>
<svg style="left:44px;top:759px" width="8" height="18" viewBox="0 0 8 18"><path d="M2.5 7.5l4 3.5-4 3.5z" fill="none" stroke="#e6e6e6"/></svg>
<div class="t" style="left:79px;top:762px;letter-spacing:0.005px">Isothermal Contours (ht)</div>
<svg style="left:59px;top:778px" width="16" height="16" viewBox="0 0 16 16"><rect x="0.5" y="2.5" width="13" height="13" fill="url(#pg2)" stroke="#2a20f0" stroke-width="1"/></svg>
<svg style="left:44px;top:777px" width="8" height="18" viewBox="0 0 8 18"><path d="M6.5 8.5v5h-5z" fill="#e6e6e6" stroke="#dcdcdc" stroke-width=".6"/></svg>
<div class="t" style="left:79px;top:780px;letter-spacing:-0.232px">2D Plot Group 3</div>
<svg style="left:78px;top:796px" width="16" height="16" viewBox="0 0 16 16"><rect x="0.5" y="2.5" width="13" height="13" fill="url(#pg2)" stroke="#4a6a7a" stroke-width="1"/></svg>
<div class="t" style="left:98px;top:798px;letter-spacing:-0.45px">Surface 1</div>
<svg style="left:59px;top:814px" width="16" height="16" viewBox="0 0 16 16"><rect x="0.5" y="2.5" width="13" height="13" fill="url(#pg2)" stroke="#2a20f0" stroke-width="1"/></svg>
<svg style="left:44px;top:813px" width="8" height="18" viewBox="0 0 8 18"><path d="M6.5 8.5v5h-5z" fill="#e6e6e6" stroke="#dcdcdc" stroke-width=".6"/></svg>
<div class="t" style="left:79px;top:816px;letter-spacing:-0.275px">2D Plot Group 4</div>
<svg style="left:78px;top:832px" width="16" height="16" viewBox="0 0 16 16"><rect x="0.5" y="2.5" width="13" height="13" fill="url(#pg2)" stroke="#4a6a7a" stroke-width="1"/></svg>
<div class="t" style="left:98px;top:834px;letter-spacing:-0.45px">Surface 1</div>
<svg style="left:59px;top:850px" width="16" height="16" viewBox="0 0 16 16"><path d="M0 5l3-3h9l3 3v9l-3 2H0z" fill="#fff"/><path d="M0 5l3-3h9l3 3M0 5h12v11H0zM12 5l3-3M12 16l3-3V5" fill="none" stroke="#a88030" stroke-width="1.1"/><path d="M3.5 7.5h6v5h-6z" fill="none" stroke="#a88030"/><path d="M5 9.5h3l-2 2h3" stroke="#a88030" stroke-width=".9" fill="none"/><path d="M2 5v11M3 2l0 3" stroke="#d8c088" stroke-width=".6"/></svg>
<div class="t" style="left:79px;top:852px;letter-spacing:-0.396px">Export</div>
<svg style="left:59px;top:868px" width="16" height="16" viewBox="0 0 16 16"><path d="M0 2l7 1 7-1v12l-7 1-7-1z" fill="#fff" stroke="#4a6a80" stroke-width="1"/><path d="M7 3v12" stroke="#4a6a80"/><path d="M1.5 5h4M1.5 7h4M8.5 5h4M8.5 7h4M8.5 9h4" stroke="#7a90a4" stroke-width=".8"/><path d="M3 6l9 9" stroke="#4a6a80" stroke-width="2.4"/><path d="M3 6l9 9" stroke="#dfe8ee" stroke-width="1"/></svg>
<div class="t" style="left:79px;top:870px;letter-spacing:-0.386px">Reports</div>
<!-- SETTINGS PANEL -->
<div class="a" style="left:466px;top:68px;width:419px;height:961px;border:1px solid #9a9a9a;border-bottom:none;border-radius:6px 6px 0 0;background:#f0f0f0"></div>
<svg style="left:466px;top:68px" width="420" height="27" viewBox="0 0 420 27">
 <defs><linearGradient id="stb" x1="0" y1="0" x2="0" y2="1"><stop offset="0" stop-color="#dee6ef"/><stop offset="1" stop-color="#c2d0de"/></linearGradient></defs>
 <path d="M1 27V6.5Q1 0.5 7 0.5H59C71 0.5 76 23.5 92 23.5H418V27z" fill="url(#stb)"/>
 <path d="M59 0.5C71 0.5 76 23.5 92 23.5H418" fill="none" stroke="#9a9a9a"/>
 <path d="M183.5 23V5Q183.5 1 179 0.5M298.5 23V5Q298.5 1 294 0.5" fill="none" stroke="#a5a5a5"/>
</svg>
<div class="a" style="left:467px;top:93px;width:417px;height:936px;background:#c5d3e1"></div>
<div class="a" style="left:469px;top:94px;width:413px;height:935px;background:#fff"></div>
<svg style="left:470px;top:72px" width="16" height="16" viewBox="0 0 16 16"><rect x="0.5" y="0.5" width="15" height="15" rx="2" fill="#dde5ed" stroke="#9aabba"/><circle cx="4" cy="3.5" r="1.2" fill="#2c2"/><circle cx="8" cy="3.5" r="1.2" fill="#2c2"/><circle cx="12" cy="3.5" r="1.2" fill="#f80"/><path d="M4 13V9M8 13V9M12 11V7" stroke="#3a5068" stroke-width="1.3"/><circle cx="4" cy="8" r="1.5" fill="none" stroke="#3a5068"/><circle cx="8" cy="8" r="1.5" fill="none" stroke="#3a5068"/><circle cx="12" cy="11" r="1.5" fill="none" stroke="#3a5068"/></svg>
<div class="t" style="left:490px;top:74px;color:#4a4a5a;letter-spacing:-0.17px">Settings</div>
<svg style="left:555px;top:72px" width="14" height="16" viewBox="0 0 14 16"><rect x="0.5" y="1.5" width="12" height="12" fill="#2bc3dd" stroke="#2a7090"/><path d="M3.5 2v11M6.5 2v11M9.5 2v11" stroke="#1a5070"/><path d="M2 4v3M8 4v2M11 8v2" stroke="#fff"/></svg>
<div class="t" style="left:573px;top:74px">Model Library</div>
<svg style="left:655px;top:72px" width="16" height="16" viewBox="0 0 16 16"><g stroke="#1a8ab6" stroke-width=".8"><circle cx="7.5" cy="3.5" r="2.4" fill="#2ad8e8"/><circle cx="7.5" cy="8" r="2.4" fill="#ff9a20"/><circle cx="7.5" cy="12.5" r="2.4" fill="#ff3070"/><circle cx="3" cy="5.8" r="2.4" fill="#30d040"/><circle cx="3" cy="10.2" r="2.4" fill="#f8e040"/><circle cx="12" cy="5.8" r="2.4" fill="#ff40e0"/><circle cx="12" cy="10.2" r="2.4" fill="#ff40c0"/></g></svg>
<div class="t" style="left:674px;top:74px">Material Browser</div>
<svg style="left:820px;top:68px" width="64" height="26" viewBox="0 0 64 26">
 <path d="M7.5 15V5.5q0-1 1-1h9.5q1 0 1 1V15" fill="#fff" stroke="#3a5a6a" stroke-width="1.2"/><path d="M7 15.5h12l3 3H7.5z" fill="#a8b8c2" stroke="#3a5a6a" stroke-width="1.1"/><text x="10" y="13" font-size="9" font-weight="bold" fill="#12c4c4" font-family="Liberation Sans">?</text>
 <rect x="30.5" y="5.5" width="9" height="3" fill="#fff" stroke="#555"/>
 <rect x="48.5" y="5.5" width="9" height="9" fill="#fff" stroke="#555"/><path d="M48.5 7.5h9" stroke="#555"/>
</svg>
<!-- title area -->
<div class="a" style="left:469px;top:94px;width:413px;height:34px;background:linear-gradient(#fdfeff,#eef2f8 40%,#e2e9f2);border-bottom:1px solid #b4cbe3"></div>
<svg style="left:475px;top:102px" width="17" height="18" viewBox="0 0 17 18"><path d="M2.5 3l11 11" stroke="#8cc8e8" stroke-width="4.5"/><path d="M1 1h5v5H1z" fill="#cfe6f6" stroke="#1b6bb0"/><path d="M13 11l3.5 3.5-3 3-3.5-3.5z" fill="#fff" stroke="#1b6bb0"/><path d="M5 5l7 7M2 6l7 7M6 2l7 7" stroke="#1b6bb0" stroke-width=".8"/></svg>
<div class="t" style="left:496px;top:101px;font-size:17px;line-height:20px;color:#0f3c72;letter-spacing:0.4px">General Projection</div>

<!-- Operator Name -->
<div class="sec" style="left:474px;top:133px;width:403px"><i class="tri"></i><span class="tx">Operator Name</span></div>
<div class="t" style="left:485px;top:166px;letter-spacing:-0.15px">Operator name:</div>
<div class="inp" style="left:573px;top:162px;width:293px"><span style="letter-spacing:-0.1px">genproj1</span></div>

<!-- Source Selection -->
<div class="sec" style="left:474px;top:193px;width:403px"><span class="tx" style="left:6px;letter-spacing:-0.24px">Source Selection</span></div>
<div class="t" style="left:485px;top:227px;letter-spacing:-0.05px">Geometric entity level:</div>
<div class="dd" style="left:608px;top:222px;width:258px"><span>Domain</span><i></i></div>
<div class="t" style="left:485px;top:255px;letter-spacing:-0.2px">Selection:</div>
<div class="dd" style="left:608px;top:250px;width:258px"><span>Manual</span><i></i></div>
<div class="a" style="left:485px;top:278px;width:325px;height:124px;border:1px solid #828790;background:#fff"></div>
<div class="t" style="left:488px;top:281px">1</div>
<svg style="left:816px;top:280px" width="48" height="84" viewBox="0 0 48 84">
 <rect x="2.5" y="1.5" width="4.5" height="4.5" rx="1" fill="#bff" stroke="#10a0c0" stroke-width="1.1"/><rect x="4" y="3" width="4.5" height="4.5" rx="1" fill="none" stroke="#10a0c0" stroke-width=".8"/>
 <rect x="7.5" y="6" width="5" height="5" rx="1" fill="#f4f" stroke="#d020d0" stroke-width="1.1"/><rect x="9" y="7.5" width="4.5" height="4.5" rx="1" fill="#e030e0" stroke="#d020d0" stroke-width=".8"/>
 <rect x="12" y="11.5" width="4.5" height="4.5" rx="1" fill="#dff" stroke="#10a0c0" stroke-width="1.1"/><rect x="13.5" y="13" width="3.5" height="3.5" rx=".8" fill="none" stroke="#10a0c0" stroke-width=".8"/>
 <path d="M36 3.5h4v4h4v4h-4v4h-4v-4h-4v-4h4z" fill="#10e4f4" stroke="#10a8c8" stroke-width="1"/>
 <rect x="2.5" y="24.5" width="8" height="10" fill="#fff" stroke="#666" stroke-width="1"/><rect x="8.5" y="28.5" width="8" height="10" fill="#fff" stroke="#666" stroke-width="1"/>
 <path d="M4 32h5v-2.5l4.5 3.5-4.5 3.5V34H4z" fill="#e8f8e8" stroke="#20b040" stroke-width="1"/>
 <rect x="32.5" y="29.5" width="11" height="3" rx=".5" fill="#10e4f4" stroke="#10a8c8" stroke-width="1"/>
 <rect x="2.5" y="46.5" width="11" height="13" fill="#b4b4b4" stroke="#666" stroke-width="1"/><rect x="5" y="45" width="6" height="2.5" rx="1" fill="#999" stroke="#666" stroke-width=".8"/><rect x="8.5" y="50.5" width="8" height="10" fill="#fff" stroke="#666" stroke-width="1"/>
 <rect x="37.5" y="45" width="2.5" height="6.5" fill="#9a8060"/><path d="M37 51.5h3.5l2.5 3v5H31c3-2 5-5 6-8z" fill="#f0cc88"/><path d="M33 58l6-6M35 59l6-6M38 59l4-4M34 54l4 4M36 52l5 5" stroke="#d0a050" stroke-width=".6"/><path d="M37 51.5h3.5" stroke="#e05030" stroke-width=".8"/>
 <rect x="5.5" y="69.5" width="10" height="10" fill="none" stroke="#2a6a90" stroke-width="1" stroke-dasharray="1 1"/><rect x="8" y="72" width="5" height="5" fill="#40d0f0" stroke="#1a90c0" stroke-width=".8"/>
 <path d="M10.5 66.5l-2 2h4zM10.5 82.5l-2-2h4zM2.5 74.5l2-2v4zM18.5 74.5l-2-2v4z" fill="#1a90c0"/>
</svg>

<!-- Source Map -->
<div class="sec" style="left:474px;top:412px;width:403px"><i class="tri"></i><span class="tx" style="letter-spacing:-0.22px">Source Map</span></div>
<div class="t" style="left:485px;top:446px;letter-spacing:-0.28px">x-expression:</div>
<div class="inp" style="left:563px;top:441px;width:303px"><span>x</span></div>
<div class="t" style="left:485px;top:472px;letter-spacing:-0.2px">y-expression:</div>
<div class="inp" style="left:563px;top:467px;width:303px"><span>z</span></div>
<div class="t" style="left:485px;top:498px;letter-spacing:-0.28px">z-expression:</div>
<div class="inp" style="left:563px;top:493px;width:303px"><span>y</span></div>
<div class="t" style="left:485px;top:525px;letter-spacing:-0.21px">Source frame:</div>
<div class="dd" style="left:563px;top:519px;width:303px"><span style="letter-spacing:-0.29px">Spatial&nbsp; (x, y, z)</span><i></i></div>

<!-- Destination Map -->
<div class="sec" style="left:474px;top:552px;width:403px"><i class="tri"></i><span class="tx" style="letter-spacing:-0.12px">Destination Map</span></div>
<div class="t" style="left:485px;top:586px;letter-spacing:-0.28px">x-expression:</div>
<div class="inp" style="left:559px;top:581px;width:307px"><span>x</span></div>
<div class="t" style="left:485px;top:612px;letter-spacing:-0.2px">y-expression:</div>
<div class="inp" style="left:559px;top:607px;width:307px"><span>z</span></div>

<!-- Advanced -->
<div class="sec" style="left:474px;top:638px;width:403px"><i class="tri"></i><span class="tx" style="letter-spacing:-0.3px">Advanced</span></div>
<div class="t" style="left:485px;top:672px;letter-spacing:0px">Integration order:</div>
<div class="inp" style="left:582px;top:667px;width:284px"><span>4</span></div>

<!-- GRAPHICS PANEL -->
<div class="a" style="left:888px;top:68px;width:962px;height:779px;border:1px solid #9a9a9a;border-radius:6px 0 0 0;background:#f0f0f0"></div>
<svg style="left:888px;top:68px" width="240" height="26" viewBox="0 0 240 26">
 <defs><linearGradient id="gtb" x1="0" y1="0" x2="0" y2="1"><stop offset="0" stop-color="#ffffff"/><stop offset="1" stop-color="#f3f3f3"/></linearGradient></defs>
 <path d="M1 24V6.5Q1 0.5 7 0.5H62C74 0.5 79 23.5 95 23.5H0z" fill="url(#gtb)"/>
 <path d="M62 0.5C74 0.5 79 23.5 95 23.5H240" fill="none" stroke="#9a9a9a"/>
 <path d="M216.5 23V5Q216.5 1 212 0.5" fill="none" stroke="#a5a5a5"/>
</svg>
<div class="a" style="left:1128px;top:91px;width:716px;height:1px;background:#9a9a9a"></div>
<div class="a" style="left:889px;top:92px;width:955px;height:754px;background:#fff"></div>
<div class="a" style="left:891px;top:94px;width:953px;height:750px;background:linear-gradient(#7fc5e8 0%,#cde9f6 100%)"></div>
<svg style="left:892px;top:72px" width="16" height="16" viewBox="0 0 16 16"><path d="M9 1l5 11H6z" fill="#b57ad0"/><path d="M9 1l5 11h-3z" fill="#d8a8e8"/><circle cx="5" cy="11.5" r="4" fill="#19b2c9"/><circle cx="4" cy="10.5" r="1.6" fill="#bff"/></svg>
<div class="t" style="left:912px;top:74px;letter-spacing:-0.25px">Graphics</div>
<svg style="left:979px;top:72px" width="16" height="16" viewBox="0 0 16 16"><path d="M9 1l5 11H6z" fill="#b57ad0"/><path d="M9 1l5 11h-3z" fill="#d8a8e8"/><circle cx="5" cy="11.5" r="4" fill="#19b2c9"/><circle cx="4" cy="10.5" r="1.6" fill="#bff"/></svg>
<div class="t" style="left:999px;top:74px;letter-spacing:-0.2px">Convergence Plot 1</div>
<!-- graphics toolbar -->
<svg style="left:1260px;top:66px" width="584" height="28" viewBox="1260 66 584 28">
 <defs><linearGradient id="pilltb" x1="0" y1="0" x2="0" y2="1"><stop offset="0" stop-color="#fff"/><stop offset=".5" stop-color="#eef1f3"/><stop offset="1" stop-color="#9aa8b0"/></linearGradient><radialGradient id="selbtn" cx=".6" cy=".6" r=".6"><stop offset="0" stop-color="#ffffff"/><stop offset=".6" stop-color="#d4e8f4"/><stop offset="1" stop-color="#b4d4e8"/></radialGradient></defs>
 <g fill="none">
  <path d="M1272 80l5-4.5h5l5 4.5-5 4.5h-5z" stroke="#9aaab4" stroke-width="1" fill="#eef3f6"/><path d="M1275 75l9 10" stroke="#6a7a84" stroke-width="1.3"/>
  <path d="M1295 80c2.5-3.5 11.5-3.5 14 0-2.5 3.5-11.5 3.5-14 0z" stroke="#3a5a6a" stroke-width="1.2" fill="#f4f8fa"/><circle cx="1302" cy="80" r="2.2" fill="#3a5a6a"/>
  <path d="M1330.5 81.5a5.5 5.5 0 1 1-2-6.5" stroke="#4a7080" stroke-width="1.6"/><path d="M1326.5 72l5 2.5-3.5 3.5z" fill="#4a7080"/>
  <rect x="1341.5" y="73.5" width="14" height="13" rx="3" stroke="#3a4a5a" stroke-dasharray="2 1.2" stroke-width="1.2"/><path d="M1344.5 80c2-2.5 6-2.5 8 0-2 2.5-6 2.5-8 0z" stroke="#3a4a5a" stroke-width="1"/><circle cx="1348.5" cy="80" r="1" fill="#3a4a5a"/>
 </g>
 <path d="M1364 78h8l-4 4z" fill="#111"/>
 <path d="M1377.5 71v18" stroke="#555"/>
 <g stroke="#3a6478" stroke-width="1.3"><circle cx="1392" cy="78.5" r="4.5" fill="#f2f6f8"/><path d="M1395.5 82l4 4" stroke-width="2"/><path d="M1389.5 78.5h5M1392 76v5" stroke-width="1.1"/>
 <circle cx="1415" cy="78.5" r="4.5" fill="#f2f6f8"/><path d="M1418.5 82l4 4" stroke-width="2"/><path d="M1412.5 78.5h5" stroke-width="1.1"/>
 <circle cx="1441" cy="78" r="4.2" fill="none" stroke="#8aa0aa"/><path d="M1444 81l3 3" stroke="#8aa0aa" stroke-width="1.6"/><rect x="1433.5" y="78.5" width="6" height="6" fill="none" stroke="#3a4a5a" stroke-dasharray="1.2 1" stroke-width="1"/><path d="M1441 76v4M1439 78h4" stroke="#3a6478" stroke-width=".9"/></g>
 <g fill="#1a9ed0"><rect x="1459.5" y="76.5" width="7" height="7" fill="none" stroke="#2a6a90" stroke-dasharray="1 1"/><rect x="1461" y="78" width="4" height="4" fill="#40c8f0"/><path d="M1463 71.5l-2 2h4zM1463 88.5l-2-2h4zM1455.5 80l2-2v4zM1470.5 80l-2-2v4z"/></g>
 <rect x="1478.5" y="72.5" width="15" height="15" fill="#dceaf2" stroke="#4a7a90"/><path d="M1486 74l-2.5 2.5h5zM1486 86l-2.5-2.5h5zM1480 80l2.5-2.5v5zM1492 80l-2.5-2.5v5z" fill="#1a9ed0"/><path d="M1486 76v8M1482 80h8" stroke="#1a8ac0" stroke-width="1.2"/>
 <path d="M1500.5 71v18" stroke="#555"/>
 <path d="M1518 86V74" stroke="#1a60f0" stroke-width="1.3"/><path d="M1516 75.5l2-3 2 3z" fill="#1a60f0"/><path d="M1518 86l7.5-3.5" stroke="#f04020" stroke-width="1.3"/><path d="M1524 81l3 1-2 2.5z" fill="#f04020"/><path d="M1518 86l-5.5-4" stroke="#20c020" stroke-width="1.3"/><path d="M1511 81l3 .5-1.5 2.5z" fill="#20c020"/>
 <path d="M1532 78h8l-4 4z" fill="#111"/>
 <g font-family="Liberation Sans" font-size="10" fill="#7a9aaa" letter-spacing="-0.3"><text x="1551.5" y="83">xy</text><text x="1574.5" y="83">yz</text><text x="1597.5" y="83">zx</text></g>
 <path d="M1549.5 74v11.5" stroke="#20c020" stroke-width="1.2"/><path d="M1547.8 75.5l1.7-2.5 1.7 2.5z" fill="#20c020"/><path d="M1549 85.5h11" stroke="#f04020" stroke-width="1.2"/><path d="M1559.5 83.8l2.5 1.7-2.5 1.7z" fill="#f04020"/>
 <path d="M1572.5 74v11.5" stroke="#1a60f0" stroke-width="1.2"/><path d="M1570.8 75.5l1.7-2.5 1.7 2.5z" fill="#1a60f0"/><path d="M1572 85.5h11" stroke="#20c020" stroke-width="1.2"/><path d="M1582.5 83.8l2.5 1.7-2.5 1.7z" fill="#20c020"/>
 <path d="M1595.5 74v11.5" stroke="#f04020" stroke-width="1.2"/><path d="M1593.8 75.5l1.7-2.5 1.7 2.5z" fill="#f04020"/><path d="M1595 85.5h11" stroke="#1a60f0" stroke-width="1.2"/><path d="M1605.5 83.8l2.5 1.7-2.5 1.7z" fill="#1a60f0"/>
 <path d="M1615.5 71v18" stroke="#555"/>
 <path d="M1627 85c-3 0-3.5-3-2.5-6 1-3 4-4 7-3.5 2-1.5 6-1.5 7.5 1.5" fill="none" stroke="#6a8a9a" stroke-width="1.1"/><rect x="1630.5" y="78.5" width="9" height="7" fill="#fff" stroke="#333" stroke-dasharray="1.5 1"/><rect x="1632" y="80" width="6" height="4" fill="#30c8f0"/>
 <path d="M1651 80c-2-3 1-6 5-5 2-2 5-1 6 1 3 0 4 3 2 5-1 2-5 2-8 2-3 0-4-1-5-3z" fill="none" stroke="#9aa4aa" stroke-width="1.1"/><path d="M1651 80c1-2 5-2 7 0" fill="none" stroke="#9aa4aa"/>
 <rect x="1666.5" y="70.5" width="22" height="19" rx="3" fill="#e2e2e2" stroke="#5a5a5a" stroke-width="1.2"/><path d="M1670.5 80c0-3 3-4.5 6-4.5h5c3 0 5 1.5 5 4s-2 4.5-5 4.5h-6c-3 0-5-1.5-5-4z" fill="url(#pilltb)" stroke="#6a7a84" stroke-width="1"/>
 <g fill="none" stroke="#6a8a9a" stroke-width=".9"><path d="M1694 82c-1-3 1-6 5-6h5c3 0 5 2 5 4.5s-2 4.5-5 4.5h-6c-2 0-4-1-4-3z"/><path d="M1699 76c3 0 4 3 4 5"/></g><rect x="1700" y="79" width="4" height="5" fill="#10e0ff" stroke="#1a7ae0" stroke-width=".6"/>
 <g fill="none" stroke="#6a8a9a" stroke-width=".9"><path d="M1717 82c-1-3 1-6 5-6h5c3 0 5 2 5 4.5s-2 4.5-5 4.5h-6c-2 0-4-1-4-3z"/><path d="M1722 76c3 0 3 4 3 9"/></g><path d="M1723 75.5c1.5 3 1.5 6 .5 10" stroke="#10d8ff" stroke-width="1.2" fill="none"/>
 <g fill="none" stroke="#6a8a9a" stroke-width=".9"><path d="M1740 82c-1-3 1-6 5-6h5c3 0 5 2 5 4.5s-2 4.5-5 4.5h-6c-2 0-4-1-4-3z"/><path d="M1745 76c3 0 4 3 4 5M1751 76c2 1 2 5 0 8"/></g><rect x="1744.5" y="77.5" width="3" height="3" fill="#10e0ff" stroke="#1a7ae0" stroke-width=".5"/>
 <path d="M1761.5 71v18" stroke="#555"/>
 <rect x="1767.5" y="70.5" width="22" height="19" rx="3" fill="url(#selbtn)" stroke="#4a4a4a" stroke-width="1.2"/><path d="M1772 73.5l5.5 5" stroke="#5a6a7a" stroke-width="2.4"/><path d="M1775 77h11l-6.5 4v6z" fill="#5a6a7a" stroke="#5a6a7a" stroke-width="1" stroke-linejoin="round"/><circle cx="1781" cy="83" r="2" fill="#fff" stroke="#6aa8e0" stroke-width=".8"/>
 <path d="M1794.5 77l3-3h9l2 3v7h-11l-3-3z" fill="#f4f7f9" stroke="#c4d0d8"/><path d="M1794.5 77h11v7M1805.5 77l3-3" fill="none" stroke="#c4d0d8"/>
 <rect x="1813.5" y="70.5" width="22" height="19" rx="3" fill="#e2e2e2" stroke="#4a4a4a" stroke-width="1.2"/><path d="M1818.5 76.5l3-3h10.5v9.5l-3 3h-10.5z M1818.5 76.5h10.5v9.5M1829 76.5l3-3" fill="none" stroke="#5a7080"/><path d="M1821.5 73.5v9.5h10.5M1818.5 86l3-3" fill="none" stroke="#5a7080" stroke-width=".8"/>
 <path d="M1838.5 71v18" stroke="#555"/>
</svg>
<!-- logo -->
<div class="t" style="left:1809px;top:106px;font-size:9.5px;line-height:10px;color:#cde8f5;letter-spacing:0.5px;font-variant:small-caps;transform:scaleX(1.6);transform-origin:0 0">Comsol</div>
<div class="t" style="left:1774px;top:116px;font-size:9.5px;line-height:10px;color:#cde8f5;letter-spacing:0.5px;font-variant:small-caps;transform:scaleX(1.4);transform-origin:0 0">Multiphysics</div>
<!-- 3D scene -->
<svg style="left:891px;top:94px" width="953" height="750" viewBox="891 94 953 750">
 <g fill="none" stroke="#8a8a8a" stroke-width="1">
  <path d="M1262.1 677.4L1295 153.2L1341.7 147.1L1341.7 152"/>
  <path d="M1318.2 150.1v4.6"/>
  <path d="M1270.8 675.5L1262.1 677.4"/>
  <path d="M1364.1 149L1543.3 229.8L1494 777.6L1482.7 770.2"/>
  <path d="M1398.1 165.1v5.8M1469.2 197.2v6.4"/>
  <path d="M1277.5 424.4l9-2"/>
  <path d="M1506 506l12 6"/>
  <path d="M1269.8 697.5L1434.1 807.8L1479.6 795.1L1464.7 785.5"/>
  <path d="M1301.4 718.2l14.6-3.4M1365.8 762l16.6-5M1442.9 792l14 9.2"/>
 </g>
 <path d="M1304.5 157.7L1482.1 239.7L1435.4 793.4L1270.6 683.2z" fill="#a1a1ea"/>
 <path d="M1304.5 157.7L1351.2 151.3L1529.9 232.2L1482.1 239.7z" fill="#b1b1e3"/>
 <path d="M1482.1 239.7L1529.9 232.2L1480.9 780.7L1435.4 793.4z" fill="#8080b1"/>
 <g fill="none" stroke="#2020ff" stroke-width="0.9">
  <path d="M1304.5 157.7L1351.2 151.3L1529.9 232.2L1482.1 239.7z"/>
  <path d="M1304.5 157.7L1270.6 683.2L1435.4 793.4L1480.9 780.7L1529.9 232.2"/>
  <path d="M1482.1 239.7L1435.4 793.4"/>
 </g>
 <g font-family="Liberation Sans" font-size="12" fill="#111" letter-spacing="0.4">
  <text x="1278" y="160">1</text>
  <text x="1256" y="430">0.5</text>
  <text x="1244.5" y="685">0</text>
  <text x="1278" y="726">0.4</text>
  <text x="1343" y="770">0.2</text>
  <text x="1417" y="816">0</text>
  <text x="1439" y="819">0</text>
  <text x="1452" y="813">0.05</text>
  <text x="1480" y="807">0.1</text>
 </g>
 <!-- triad -->
 <path d="M935 799.6L937 779" stroke="#0000ff" stroke-width="1.6"/><path d="M933.8 780L937.3 771.5L939.6 780z" fill="#0000ff"/>
 <path d="M935 799.6L953 795" stroke="#ff0000" stroke-width="1.6"/><path d="M952 790.5L959.5 795L953.5 799z" fill="#ff0000"/>
 <path d="M935 799.6L922 792" stroke="#00e000" stroke-width="1.6"/><path d="M917 790L925 789.5L922.5 795.5z" fill="#00e000"/>
 <g font-family="Liberation Sans" font-size="11" fill="#111"><text x="934" y="768">z</text><text x="908" y="791">y</text><text x="961" y="797">x</text></g>
</svg>

<!-- MESSAGES PANEL -->
<div class="a" style="left:888px;top:850px;width:962px;height:179px;border:1px solid #9a9a9a;border-bottom:none;border-radius:6px 0 0 0;background:#f0f0f0"></div>
<svg style="left:888px;top:850px" width="320" height="25" viewBox="0 0 320 25">
 <defs><linearGradient id="mtb" x1="0" y1="0" x2="0" y2="1"><stop offset="0" stop-color="#ffffff"/><stop offset="1" stop-color="#f2f2f2"/></linearGradient></defs>
 <path d="M1 23.5V6.5Q1 0.5 7 0.5H87C99 0.5 104 23.5 120 23.5H0z" fill="url(#mtb)"/>
 <path d="M87 0.5C99 0.5 104 23.5 120 23.5H320" fill="none" stroke="#9a9a9a"/>
 <path d="M185.5 23V5Q185.5 1 181 0.5M233.5 23V5Q233.5 1 229 0.5M299.5 23V5Q299.5 1 295 0.5" fill="none" stroke="#a5a5a5"/>
</svg>
<div class="a" style="left:1208px;top:873px;width:636px;height:1px;background:#9a9a9a"></div>
<div class="a" style="left:889px;top:874px;width:955px;height:155px;background:#fff"></div>
<svg style="left:891px;top:856px" width="16" height="13" viewBox="0 0 16 13"><rect x="0.5" y="1.5" width="14" height="10" fill="#eef3f6" stroke="#8aa4b8"/><path d="M1 2l6.5 6 6.5-6" fill="none" stroke="#8aa4b8"/></svg>
<div class="t" style="left:912px;top:856px;letter-spacing:-0.45px">Messages</div>
<svg style="left:970px;top:856px" width="12" height="12" viewBox="0 0 12 12"><path d="M1.5 3L3 1.5 6 4.5 9 1.5 10.5 3 7.5 6 10.5 9 9 10.5 6 7.5 3 10.5 1.5 9 4.5 6z" fill="#fff" stroke="#8a8a8a" stroke-width=".9"/></svg>
<svg style="left:1006px;top:857px" width="16" height="10" viewBox="0 0 16 10"><rect x="0.5" y="2.5" width="15" height="5" rx="1" fill="#e8eef2" stroke="#9ab"/><rect x="1" y="3" width="9" height="4" fill="#7ad020"/><path d="M3 3v4M5 3v4M7 3v4M9 3v4M11 3v4M13 3v4" stroke="#fff" stroke-width=".5" opacity=".7"/></svg>
<div class="t" style="left:1026px;top:856px;letter-spacing:-0.37px">Progress</div>
<svg style="left:1079px;top:855px" width="15" height="14" viewBox="0 0 15 14"><rect x="0.5" y="0.5" width="13" height="13" fill="#fff" stroke="#8aa4b8"/><path d="M3 4h2M7 4h2M10 4h2M3 7h2M7 7h2M10 7h2M3 10h2M7 10h2M10 10h2" stroke="#8aa4b8"/></svg>
<div class="t" style="left:1099px;top:856px;letter-spacing:-0.5px">Log</div>
<svg style="left:1129px;top:855px" width="13" height="15" viewBox="0 0 13 15"><rect x="0.5" y="0.5" width="11" height="14" fill="#fff" stroke="#8aa4b8"/><path d="M2 2.5h1.2M2 4.5h1.2M2 6.5h1.2M2 8.5h1.2M2 10.5h1.2M2 12.5h1.2" stroke="#1a9ee0" stroke-width="1.2"/><path d="M4.5 2.5h5M4.5 4.5h5M4.5 6.5h4M4.5 8.5h5M4.5 10.5h5M4.5 12.5h3" stroke="#7a8a94"/></svg>
<div class="t" style="left:1147px;top:856px;letter-spacing:-0.55px">Results</div>
<div class="a" style="left:889px;top:876px;width:955px;height:153px;overflow:hidden">
<div class="msg" style="left:2px;top:-5px;letter-spacing:-0.14px">Solution time (Study 1): 1 s.</div>
<div class="msg" style="left:2px;top:10px">Number of degrees of freedom solved for: 1429.</div>
<div class="msg" style="left:2px;top:25px;letter-spacing:-0.14px">Solution time (Study 1): 1 s.</div>
<div class="msg" style="left:2px;top:40px">Number of degrees of freedom solved for: 1429.</div>
<div class="msg" style="left:2px;top:55px;letter-spacing:-0.14px">Solution time (Study 1): 1 s.</div>
<div class="msg" style="left:2px;top:70px">Number of degrees of freedom solved for: 1429.</div>
<div class="msg" style="left:2px;top:85px;letter-spacing:-0.14px">Solution time (Study 1): 1 s.</div>
<div class="msg" style="left:2px;top:100px">Number of degrees of freedom solved for: 1429.</div>
<div class="msg" style="left:2px;top:115px;letter-spacing:-0.14px">Solution time (Study 1): 1 s.</div>
<div class="msg" style="left:2px;top:130px">Number of degrees of freedom solved for: 1429.</div>
<div class="msg" style="left:2px;top:145px;letter-spacing:-0.14px">Solution time (Study 1): 1 s.</div>
</div>

</body></html>
